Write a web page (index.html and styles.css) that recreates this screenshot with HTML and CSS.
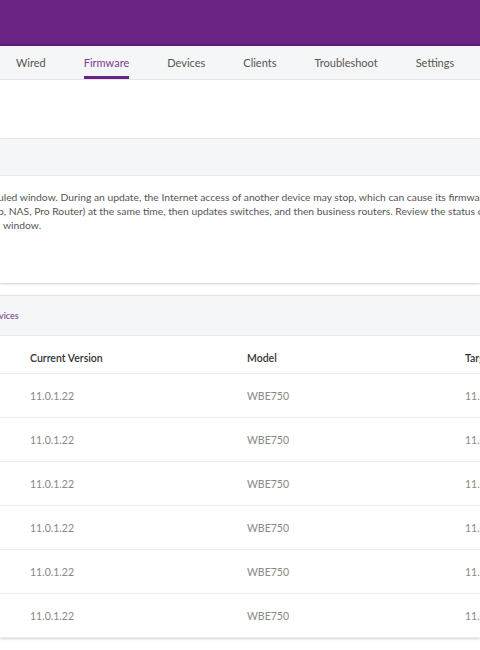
FILE: index.html
```
<!DOCTYPE html>
<html lang="en">
	<head>
		<meta charset="UTF-8" />
		<meta name="viewport" content="width=device-width, initial-scale=1.0" />
		<title>Firmware</title>
		<link rel="stylesheet" href="styles.css">
	</head>

	<body>
		<header class="topbar"></header>

		<nav class="tabs">
			<a class="tab">Wired</a>
			<a class="tab active">Firmware</a>
			<a class="tab">Devices</a>
			<a class="tab">Clients</a>
			<a class="tab">Troubleshoot</a>
			<a class="tab">Settings</a>
		</nav>

		<main class="content">
			<section class="card">
				<div class="card-head"></div>
				<div class="card-body notice">
					<div class="line">uled window. During an update, the Internet access of another device may stop, which can cause its firmware update to fail.</div>
					<div class="line">p, NAS, Pro Router) at the same time, then updates switches, and then business routers. Review the status of each device.</div>
					<div class="line indent">window.</div>
				</div>
			</section>

			<section class="card">
				<div class="card-head">
					<span class="crumb">vices</span>
				</div>
				<table class="devices">
					<thead>
						<tr>
							<th>Current Version</th>
							<th>Model</th>
							<th>Target Version</th>
						</tr>
					</thead>
					<tbody>
						<tr><td>11.0.1.22</td><td>WBE750</td><td>11.0.1.22</td></tr>
						<tr><td>11.0.1.22</td><td>WBE750</td><td>11.0.1.22</td></tr>
						<tr><td>11.0.1.22</td><td>WBE750</td><td>11.0.1.22</td></tr>
						<tr><td>11.0.1.22</td><td>WBE750</td><td>11.0.1.22</td></tr>
						<tr><td>11.0.1.22</td><td>WBE750</td><td>11.0.1.22</td></tr>
						<tr><td>11.0.1.22</td><td>WBE750</td><td>11.0.1.22</td></tr>
					</tbody>
				</table>
			</section>
		</main>
	</body>
</html>
```

FILE: styles.css
```
body {
	margin: 0;
	font-family: Lato, "Open Sans", sans-serif;
	color: #555;
	background: #fff;
	overflow: hidden;
}

.topbar {
	height: 44px;
	background: #6a2483;
	border-bottom: 2px solid #5e1d75;
}

.tabs {
	display: flex;
	gap: 38px;
	height: 33px;
	padding-left: 16px;
	background: #f5f6f7;
	border-bottom: 1px solid #e4e5e7;
	white-space: nowrap;
}

.tab {
	display: flex;
	align-items: center;
	font-size: 11px;
	color: #555;
	border-bottom: 3px solid transparent;
	padding-top: 3px;
}

.tab.active {
	color: #7b3a93;
	border-bottom-color: #6a2483;
}

.content {
	padding-top: 58px;
}

.card {
	background: #fff;
	border-top: 1px solid #e4e5e7;
	box-shadow: 0 1px 2px rgba(0, 0, 0, 0.18);
	margin-bottom: 12px;
}

.card-head {
	height: 36px;
	background: #f5f6f8;
	border-bottom: 1px solid #e6e7e9;
	display: flex;
	align-items: center;
}

.notice {
	padding: 14px 0 51px;
	font-size: 10.3px;
	line-height: 14px;
	color: #555;
	white-space: nowrap;
}

.notice .line {
	margin-left: -2px;
}

.notice .indent {
	margin-left: 3px;
}

.card + .card .card-head {
	height: 39px;
}

.crumb {
	font-size: 9px;
	color: #6a3a82;
	margin-left: -1px;
}

.devices {
	border-collapse: collapse;
	table-layout: fixed;
	margin-top: 7px;
	width: 700px;
	font-size: 10.5px;
	white-space: nowrap;
}

.devices th,
.devices td {
	text-align: left;
	padding: 0;
	border-bottom: 1px solid #ececee;
}

.devices th {
	height: 30px;
	font-weight: 600;
	color: #333;
}

.devices td {
	height: 43px;
	color: #888;
}

.devices th:first-child {
	padding-left: 30px;
	width: 217px;
}

.devices td:first-child {
	padding-left: 30px;
}

.devices th:nth-child(2) {
	width: 218px;
}
```
